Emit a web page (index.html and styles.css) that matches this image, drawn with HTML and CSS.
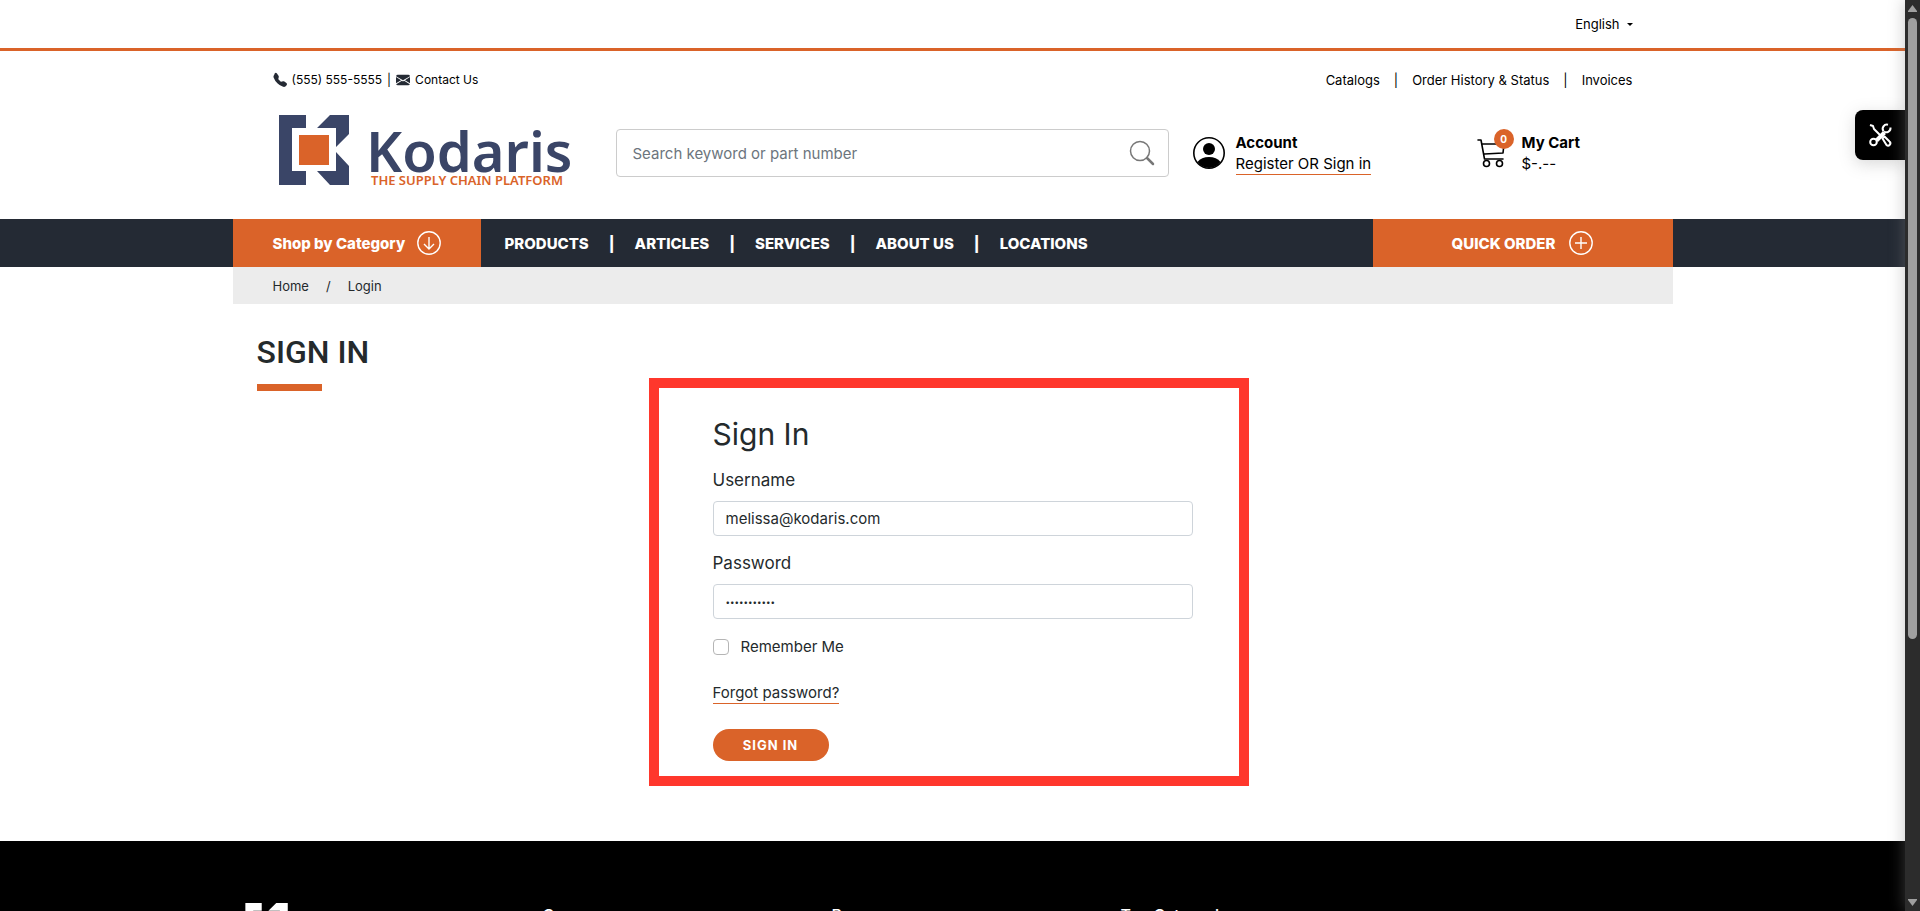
FILE: index.html
```html
<!DOCTYPE html>
<html lang="en">
<head>
  <meta charset="UTF-8">
  <meta name="viewport" content="width=device-width, initial-scale=1">
  <title>Sign In | Kodaris</title>
  <link rel="stylesheet" href="styles.css">
</head>
<body>
  <div class="page">

    <div class="topbar">
      <div class="container">
        <button class="language" type="button">English <span class="caret"></span></button>
      </div>
    </div>

    <header class="container header">
      <div class="links-row">
        <div class="contact">
          <svg width="14" height="14" viewBox="0 0 16 16" fill="#242a34"><path d="M1.900.5a1.700 1.700 0 0 1 2.600.2l1.800 2.300c.3.4.4 1 .3 1.500L6.100 6.700a.7.7 0 0 0 .2.600L8.700 9.800a.7.7 0 0 0 .6.200l2.200-.6a1.700 1.700 0 0 1 1.500.3l2.300 1.800c.8.6.9 1.900.2 2.600l-1 1c-.8.8-1.900 1.100-2.900.7a17.600 17.600 0 0 1-6.600-4.200A17.600 17.600 0 0 1 .7 5C.3 4 .6 2.900 1.300 2.200z"/></svg>
          <a href="#">(555) 555-5555</a>
          <span>|</span>
          <svg width="14" height="14" viewBox="0 0 16 16" fill="#242a34"><path d="M.1 3.600A2 2 0 0 1 2 2h12a2 2 0 0 1 2 1.600L8 8.400zM0 4.700v7.100l5.800-3.500zM6.800 8.800l-6.600 4A2 2 0 0 0 2 14h12a2 2 0 0 0 1.800-1.200l-6.600-4L8 9.600zm3.400-.5L16 11.800V4.700z"/></svg>
          <a href="#">Contact Us</a>
        </div>
        <div class="quick-links">
          <a href="#">Catalogs</a><span>|</span><a href="#">Order History &amp; Status</a><span>|</span><a href="#">Invoices</a>
        </div>
      </div>

      <div class="main-row">
        <a class="logo" href="#" aria-label="Kodaris home">
          <svg width="296" height="74" viewBox="0 0 296 74">
            <path fill="#3a4567" d="M0 1h27v13H13v43h14v14H0zM51 1h19v19L57 33V14H38zM57 38l13 14v19H51L38 57h19z"/>
            <path fill="#da6329" d="M20 21h30v30H20z"/>
            <text class="logo-name" x="87" y="58">Kodaris</text>
            <text class="logo-tag" x="92" y="71">THE SUPPLY CHAIN PLATFORM</text>
          </svg>
        </a>

        <form class="search">
          <input type="search" placeholder="Search keyword or part number" aria-label="Search">
          <button type="submit" aria-label="Search">
            <svg width="26" height="26" viewBox="0 0 26 26" fill="none" stroke="#777" stroke-linecap="round"><circle cx="11" cy="11" r="9.500" stroke-width="1.500"/><path d="M18 18l6 6" stroke-width="2.500"/></svg>
          </button>
        </form>

        <div class="account">
          <svg width="32" height="32" viewBox="0 0 32 32"><circle cx="16" cy="16" r="15.200" fill="none" stroke="#000" stroke-width="1.600"/><circle cx="16" cy="12" r="6"/><path d="M4.500 25C7 21.500 11 20 16 20s9 1.500 11.500 5A15 15 0 0 1 16 31 15 15 0 0 1 4.500 25z"/></svg>
          <div>
            <strong>Account</strong>
            <a class="underlined" href="#">Register OR Sign in</a>
          </div>
        </div>

        <a class="cart" href="#">
          <span class="cart-icon">
            <svg width="28" height="30" viewBox="0 0 28 30" fill="none" stroke="#000" stroke-width="1.600" stroke-linejoin="round" stroke-linecap="round"><path d="M1 2h3l3.500 19H26M5 6h22l-1 9-18.500 1M26 21H8"/><circle cx="9.500" cy="25.500" r="3"/><circle cx="22.500" cy="25.500" r="3"/></svg>
            <span class="badge">0</span>
          </span>
          <span class="cart-text">
            <strong>My Cart</strong>
            <span>$-.--</span>
          </span>
        </a>
      </div>
    </header>

    <nav class="navbar">
      <div class="container nav-inner">
        <button class="shop" type="button">Shop by Category
          <svg width="24" height="24" viewBox="0 0 24 24" fill="none" stroke="#fff" stroke-width="1.400"><circle cx="12" cy="12" r="11.200"/><path d="M12 6v12M7 13l5 5 5-5"/></svg>
        </button>
        <div class="menu">
          <a href="#">PRODUCTS</a><span>|</span><a href="#">ARTICLES</a><span>|</span><a href="#">SERVICES</a><span>|</span><a href="#">ABOUT US</a><span>|</span><a href="#">LOCATIONS</a>
        </div>
        <a class="quick-order" href="#">QUICK ORDER
          <svg width="24" height="24" viewBox="0 0 24 24" fill="none" stroke="#fff" stroke-width="1.400"><circle cx="12" cy="12" r="11.200"/><path d="M12 6v12M6 12h12"/></svg>
        </a>
      </div>
    </nav>

    <div class="container breadcrumb">
      <a href="#">Home</a><span>/</span><a href="#">Login</a>
    </div>

    <main class="container content">
      <h1>SIGN IN</h1>
      <form class="signin">
        <h2>Sign In</h2>
        <label for="username">Username</label>
        <input id="username" type="text" value="melissa@kodaris.com">
        <label for="password">Password</label>
        <input id="password" type="password" value="abcdefghijk">
        <div class="remember">
          <input id="remember" type="checkbox">
          <label for="remember">Remember Me</label>
        </div>
        <a class="underlined" href="#">Forgot password?</a>
        <button type="submit">SIGN IN</button>
      </form>
    </main>

    <footer>
      <div class="container footer-inner">
        <svg width="180" height="43" viewBox="0 0 296 71" fill="#fff">
          <path d="M0 0h27v13H13v43h14v14H0zM51 0h19v19L57 32V13H38zM57 37l13 14v19H51L38 56h19z"/>
          <text class="logo-name" x="87" y="57">Kodaris</text>
        </svg>
        <h3>Company</h3>
        <h3>Resources</h3>
        <h3>Top Categories</h3>
      </div>
    </footer>
  </div>

  <button class="tools" type="button" aria-label="Tools">
    <svg width="24" height="24" viewBox="0 0 24 24" fill="none" stroke="#fff" stroke-width="2" stroke-linejoin="round"><path d="M2 2l3 1 1 3 8 8" /><path d="M14.500 15.500l2-2 5 5a1.500 1.500 0 0 1-3 3.500z"/><path d="M8.500 17.500l8-8" stroke-width="4"/><circle cx="5.500" cy="19" r="3.300"/><path d="M20 1.700a4.200 4.200 0 0 0-4.500 6.500M22.500 4.500a4.200 4.200 0 0 1-6.500 4"/></svg>
  </button>

  <!-- dark scrollbar -->
  <div class="scrollbar">
    <svg width="9" height="7" viewBox="0 0 9 7" fill="#9f9f9f"><path d="M4.500 0L9 6v1H0V6z"/></svg>
    <div class="track"><div class="thumb"></div></div>
    <svg width="9" height="7" viewBox="0 0 9 7" fill="#9f9f9f"><path d="M4.500 7L0 1V0h9v1z"/></svg>
  </div>
</body>
</html>
```
FILE: styles.css
```css
* {
  box-sizing: border-box;
}
body {
  margin: 0;
  padding-right: 15px;
  font-family: Inter, "Open Sans", sans-serif;
  font-size: 15px;
  font-weight: 400;
  color: #242a2c;
  background-color: #fff;
}
a {
  color: inherit;
  text-decoration: none;
}
button, input {
  font: inherit;
  color: inherit;
}
button {
  padding: 0;
  border: none;
  background: none;
  cursor: pointer;
}
svg {
  display: block;
  flex: none;
  overflow: visible;
}
.page {
  height: 100vh;
  overflow: hidden;
}
.container {
  width: 100%;
  max-width: 1440px;
  margin: 0 auto;
}

/* top bar */
.topbar {
  border-bottom: 3px solid #da6329;
}
.topbar .container {
  display: flex;
  justify-content: flex-end;
  align-items: center;
  height: 48px;
  padding: 0 40px;
}
.language {
  display: flex;
  align-items: center;
  gap: 7px;
  font-size: 13px;
  color: #000;
}
.caret {
  border: 3px solid transparent;
  border-top-color: #000;
  border-bottom: none;
}

/* header */
.header {
  height: 168px;
  padding: 20px 40px 0;
  color: #000;
}
.links-row {
  display: flex;
  justify-content: space-between;
  font-size: 13px;
  line-height: 18px;
}
.contact {
  display: flex;
  align-items: center;
  gap: 5px;
  font-size: 12px;
}
.quick-links {
  display: flex;
  gap: 14px;
}
.main-row {
  display: flex;
  align-items: center;
  height: 78px;
  margin-top: 25px;
}
.logo {
  align-self: flex-start;
  margin-left: 6px;
}
.logo-name {
  font-family: "Noto Sans", sans-serif;
  font-size: 56px;
  font-weight: 600;
  fill: #3a4567;
}
.logo-tag {
  font-family: "Noto Sans", sans-serif;
  font-size: 13px;
  font-weight: 600;
  fill: #da6329;
}
.search {
  display: flex;
  align-items: center;
  flex: 1;
  max-width: 553px;
  height: 48px;
  margin-left: 41px;
  padding: 0 13px 0 16px;
  border: 1px solid #ccc;
  border-radius: 4px;
}
.search input {
  flex: 1;
  border: none;
  outline: none;
  background: none;
  padding: 0;
}
.search input::placeholder {
  color: #6c757d;
}
.account {
  display: flex;
  align-items: center;
  gap: 11px;
  width: 284px;
  margin-left: 24px;
}
.account strong, .cart-text strong, .cart-text span {
  display: block;
  line-height: 21px;
}
.account strong, .cart-text strong {
  font-weight: 700;
}
.underlined {
  display: inline-block;
  line-height: 21px;
  border-bottom: 1px solid #da6329;
}
.cart {
  display: flex;
  align-items: center;
  gap: 17px;
}
.cart-icon {
  position: relative;
}
.badge {
  position: absolute;
  top: -9px;
  right: -9px;
  width: 20px;
  height: 20px;
  border-radius: 50%;
  background-color: #da6329;
  color: #fff;
  font-size: 10px;
  font-weight: 700;
  line-height: 20px;
  text-align: center;
}

/* navigation */
.navbar {
  background-color: #242a34;
  color: #fff;
  font-weight: 800;
}
.nav-inner {
  display: flex;
  height: 48px;
}
.shop {
  display: flex;
  align-items: center;
  gap: 12px;
  width: 248px;
  padding-left: 40px;
  background-color: #da6329;
}
.menu {
  display: flex;
  align-items: center;
  flex: 1;
  gap: 20px;
  padding-left: 24px;
}
.quick-order {
  display: flex;
  align-items: center;
  justify-content: center;
  gap: 14px;
  width: 300px;
  background-color: #da6329;
}
.breadcrumb {
  display: flex;
  align-items: center;
  gap: 17px;
  height: 37px;
  padding: 0 40px;
  background-color: #ececec;
  font-size: 13px;
}

/* sign in */
.content {
  padding: 24px 32px 55px 24px;
}
h1 {
  margin: 0;
  font-family: Roboto, sans-serif;
  font-size: 32px;
  font-weight: 500;
  line-height: 48px;
}
h1::after {
  content: "";
  display: block;
  width: 65px;
  height: 7px;
  margin-top: 8px;
  background-color: #da6329;
}
.signin {
  display: flex;
  flex-direction: column;
  align-items: flex-start;
  width: 600px;
  height: 408px;
  margin: -13px auto 0;
  padding: 28px 54px 0;
  border: 10px solid #ff372c;
}
.signin h2 {
  margin: 0 0 16px;
  font-size: 30px;
  font-weight: 400;
  line-height: 36px;
}
.signin label {
  font-size: 17px;
  line-height: 24px;
}
.signin input[type="text"], .signin input[type="password"] {
  width: 480px;
  height: 35px;
  margin: 9px 0 15px;
  padding: 0 12px;
  border: 1px solid #ced4da;
  border-radius: 4px;
}
.signin input[type="password"] {
  font-size: 8px;
}
.signin .remember {
  display: flex;
  align-items: center;
  gap: 12px;
  margin: 1px 0 23px;
}
.remember label {
  font-size: 15px;
}
.remember input {
  appearance: none;
  width: 16px;
  height: 16px;
  margin: 0;
  border: 1px solid #b5b5b5;
  border-radius: 4px;
}
.signin button {
  width: 116px;
  height: 32px;
  margin-top: 25px;
  border-radius: 16px;
  background-color: #da6329;
  color: #fff;
  font-size: 13px;
  font-weight: 700;
  letter-spacing: 1px;
}

/* footer */
footer {
  background-color: #000;
  color: #fff;
}
.footer-inner {
  display: grid;
  grid-template-columns: 298px 289px 289px 1fr;
  height: 240px;
  padding: 62px 12px 0;
}
footer .logo-name {
  fill: #fff;
}
footer h3 {
  margin: 0;
  font-size: 16px;
  font-weight: 500;
  line-height: 24px;
}

/* tools tab and scrollbar */
.tools {
  position: fixed;
  top: 110px;
  right: 15px;
  display: flex;
  align-items: center;
  justify-content: center;
  width: 50px;
  height: 50px;
  border-radius: 8px 0 0 8px;
  background-color: #000;
  box-shadow: 0 4px 16px rgba(128, 128, 128, 0.3);
}
.scrollbar {
  position: fixed;
  top: 0;
  right: 0;
  bottom: 0;
  display: flex;
  flex-direction: column;
  align-items: center;
  gap: 6px;
  width: 15px;
  padding: 5px 0;
  background-color: #2c2c2c;
  box-shadow: 0 0 16px rgba(128, 128, 128, 0.45);
}
.track {
  flex: 1;
}
.thumb {
  width: 9px;
  height: 71%;
  border-radius: 5px;
  background-color: #9f9f9f;
}
```
